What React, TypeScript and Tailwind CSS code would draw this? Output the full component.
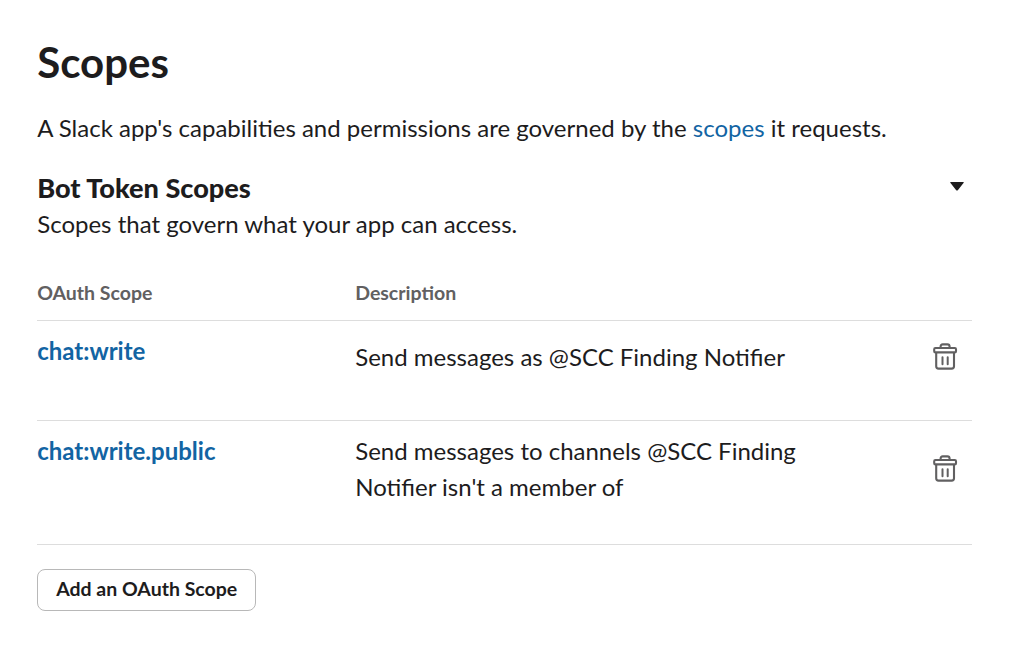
import React from "react"

interface Scope {
  name: string
  description: string
}

const scopes: Scope[] = [
  { name: "chat:write", description: "Send messages as @SCC Finding Notifier" },
  {
    name: "chat:write.public",
    description: "Send messages to channels @SCC Finding Notifier isn't a member of",
  },
]

function TrashIcon() {
  return (
    <svg width="25" height="27" viewBox="0 0 25 27" fill="none" stroke="#616061" strokeWidth="2.1" strokeLinecap="round" strokeLinejoin="round">
      <rect x="1.2" y="5" width="21.8" height="4.4" rx="1.2" />
      <path d="M7.6 4.5V3.7Q7.6 1.4 9.8 1.4h4.6q2.2 0 2.2 2.3v.8" />
      <path d="M3.2 10v13.2q0 2.4 2.4 2.4h13q2.4 0 2.4-2.4V10" />
      <path d="M9.5 14.2v7M14.7 14.2v7" strokeWidth="2" />
    </svg>
  )
}

function ScopeRow({ scope }: { scope: Scope }) {
  return (
    <div className="grid grid-cols-[318px_460px_1fr] border-b border-[#dddddd] pt-3 pb-[39px]">
      <a href="#" className="text-2xl leading-9 font-bold text-[#1264a3]">
        {scope.name}
      </a>
      <p className="flex min-h-12 items-center text-2xl leading-9">{scope.description}</p>
      <button className="mr-3.5 mb-px self-center justify-self-end" aria-label="Remove scope">
        <TrashIcon />
      </button>
    </div>
  )
}

export default function App() {
  return (
    <main className="h-[649px] w-[1015px] bg-white pt-[35px] pr-[43px] pl-[37.2px] font-['Lato',sans-serif] text-[#1d1c1d]">
      <h1 className="text-[42px] leading-[54px] font-bold">Scopes</h1>
      <p className="mt-[21px] text-2xl leading-9">
        A Slack app's capabilities and permissions are governed by the{" "}
        <a href="#" className="text-[#1264a3]">scopes</a> it requests.
      </p>
      <div className="mt-6 flex justify-between">
        <div>
          <h2 className="text-[27.1px] leading-9 font-black">Bot Token Scopes</h2>
          <p className="text-2xl leading-9">Scopes that govern what your app can access.</p>
        </div>
        <svg className="mt-3 mr-2" width="14" height="9" viewBox="0 0 14 9">
          <path d="M1 0h12q1.5 0 .5 1L8 8q-1 1-2 0L.5 1q-1-1 .5-1" fill="#1d1c1d" />
        </svg>
      </div>
      <section className="mt-[37px]">
        <div className="grid grid-cols-[318px_1fr] border-b border-[#dddddd] pb-[13px] text-[19.5px] leading-7 font-bold text-[#616061]">
          <span>OAuth Scope</span>
          <span>Description</span>
        </div>
        {scopes.map((scope) => (
          <ScopeRow key={scope.name} scope={scope} />
        ))}
      </section>
      <button className="mt-6 h-[42px] w-[219px] rounded-lg border border-[#b8b8b8] pb-0.5 text-[19.5px] font-bold">
        Add an OAuth Scope
      </button>
    </main>
  )
}
